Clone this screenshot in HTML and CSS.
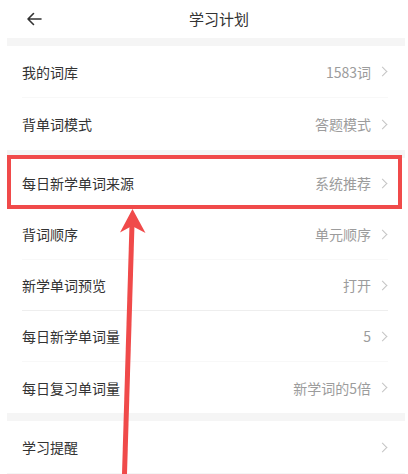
FILE: index.html
```html
<!DOCTYPE html>
<html lang="zh">
<head>
<meta charset="utf-8">
<link rel="stylesheet" href="styles.css">
</head>
<body>
<div class="page">
  <header class="header">
    <span class="back">
      <svg width="16" height="14" viewBox="0 0 16 14"><path d="M15 7H2M7.5 1.5L2 7l5.5 5.5" fill="none" stroke="#333" stroke-width="1.6" stroke-linecap="round" stroke-linejoin="round"/></svg>
    </span>
    <h1 class="title">学习计划</h1>
    <span></span>
  </header>
  <div class="band"></div>
  <section class="group g1">
    <div class="row"><span class="label">我的词库</span><span class="value">1583词<i class="chev"></i></span></div>
    <div class="row"><span class="label">背单词模式</span><span class="value">答题模式<i class="chev"></i></span></div>
  </section>
  <div class="band"></div>
  <section class="group g2">
    <div class="row highlight"><span class="label">每日新学单词来源</span><span class="value">系统推荐<i class="chev"></i></span></div>
    <div class="row"><span class="label">背词顺序</span><span class="value">单元顺序<i class="chev"></i></span></div>
    <div class="row"><span class="label">新学单词预览</span><span class="value">打开<i class="chev"></i></span></div>
    <div class="row"><span class="label">每日新学单词量</span><span class="value">5<i class="chev"></i></span></div>
    <div class="row"><span class="label">每日复习单词量</span><span class="value">新学词的5倍<i class="chev"></i></span></div>
  </section>
  <div class="band"></div>
  <section class="group g3">
    <div class="row"><span class="label">学习提醒</span><span class="value"><i class="chev"></i></span></div>
  </section>
  <div class="band"></div>
  <svg class="pointer" width="408" height="474" viewBox="0 0 408 474">
    <path d="M122 474L129.5 224L134.5 224L127 474Z" fill="#f04a4a"/>
    <path d="M132.5 209L145.5 233L133 226.5L131 226.5L120 232.5Z" fill="#f04a4a"/>
  </svg>
</div>
</body>
</html>
```

FILE: styles.css
```css
* { box-sizing: border-box; }
html, body { margin: 0; padding: 0; background: #fff; }
body {
  font-family: "Noto Sans CJK SC", "Noto Sans", sans-serif;
  color: #333;
  width: 408px;
  height: 474px;
  overflow: hidden;
}
.page { position: relative; width: 408px; height: 474px; }
.header {
  height: 38px;
  display: grid;
  grid-template-columns: 1fr auto 1fr;
  align-items: center;
  padding: 0 0 0 26px;
}
.back { display: flex; align-items: center; height: 14px; }
.title {
  margin: 0;
  font-size: 15px;
  font-weight: 400;
  color: #333;
  padding-left: 4px;
  line-height: 20px;
}
.band {
  height: 8px;
  margin: 0 3px 0 7px;
  background: #f5f5f5;
}
.group { display: flex; flex-direction: column; }
.g1 .row { height: 52px; }
.g2 .row { height: 51px; }
.g3 .row { height: 52px; }
.row {
  display: flex;
  align-items: center;
  justify-content: space-between;
  margin: 0 20px 0 22px;
  border-bottom: 1px solid #f8f8f8;
  font-size: 14px;
}
.row:last-child { border-bottom: none; }
.g2 .row:nth-child(3) { border-bottom-color: #eeeeee; }
.label { color: #333; }
.value { color: #9c9c9c; display: flex; align-items: center; }
.chev {
  display: inline-block;
  width: 7px;
  height: 7px;
  border-right: 1.2px solid #c4c4c4;
  border-top: 1.2px solid #c4c4c4;
  transform: rotate(45deg);
  margin-left: 8px;
  margin-right: 2px;
}
.highlight { position: relative; }
.highlight::after {
  content: "";
  position: absolute;
  left: -15px;
  right: -14px;
  top: -3px;
  bottom: -1px;
  border: 4.5px solid #f04a4a;
}
.pointer { position: absolute; left: 0; top: 0; pointer-events: none; }
```
